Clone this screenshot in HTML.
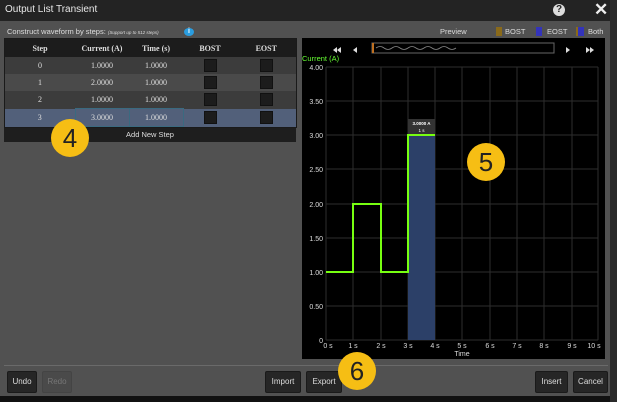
<!DOCTYPE html>
<html><head><style>
body{margin:0;width:617px;height:402px;background:#111;font-family:"Liberation Sans",sans-serif;overflow:hidden;position:relative}
.a{position:absolute}
.btn{position:absolute;top:371px;height:20px;background:#262626;border:1px solid #1a1a1a;border-radius:2px;color:#ddd;font-size:8px;line-height:20px;text-align:center}
.circ{position:absolute;width:38px;height:38px;border-radius:50%;background:#f6be14;color:#222;font-size:26px;line-height:38px;text-align:center}
table{border-collapse:collapse;font-size:8px;color:#ddd;font-family:"Liberation Serif",serif}
td{text-align:center;height:17px;padding:0}
.cb{display:inline-block;width:11px;height:11px;background:#1c1c1c;border:1px solid #111;vertical-align:middle}
</style></head><body>
<div class="a" style="left:0;top:0;width:610px;height:396px;background:#515151;border-right:1px solid #333"></div>
<div class="a" style="left:0;top:0;width:610px;height:21px;background:#232323;color:#e8e8e8;font-size:10px;line-height:20px;padding-left:5px;box-sizing:border-box">Output List Transient</div>
<div class="a" style="left:553px;top:4px;width:12px;height:12px;border-radius:50%;background:#ddd;color:#232323;font-size:10px;font-weight:bold;line-height:12px;text-align:center">?</div>
<div class="a" style="left:594px;top:1px;color:#eee;font-size:17px;font-weight:bold;line-height:18px">✕</div>
<div class="a" style="left:610px;top:0;width:7px;height:402px;background:#2a2a2a"></div>
<div class="a" style="left:7px;top:27px;color:#ddd;font-size:7.5px">Construct waveform by steps: <span style="font-size:4.5px;font-style:italic">(Support up to 512 steps)</span></div>
<div class="a" style="left:184px;top:28px;width:10px;height:8px;border-radius:50%;background:#2a9de0;color:#fff;font-size:7px;line-height:8px;text-align:center;font-weight:bold">i</div>
<div class="a" style="left:440px;top:27px;color:#ddd;font-size:7.5px">Preview</div>
<div class="a" style="left:496px;top:27px;width:6px;height:9px;background:#8a6a1a"></div>
<div class="a" style="left:505px;top:27px;color:#ddd;font-size:7.5px">BOST</div>
<div class="a" style="left:536px;top:27px;width:6px;height:9px;background:#3333bb"></div>
<div class="a" style="left:547px;top:27px;color:#ddd;font-size:7.5px">EOST</div>
<div class="a" style="left:576px;top:27px;width:6px;height:9px;background:#3333bb;border-left:2px solid #8a6a1a"></div>
<div class="a" style="left:588px;top:27px;color:#ddd;font-size:7.5px">Both</div>
<div class="a" style="left:4px;top:38px;width:293px;height:90px;background:#1a1a1a">
<table style="width:291px;margin:1px">
<tr style="height:18px;background:#1c1c1c;font-weight:bold"><td style="width:70px">Step</td><td style="width:54px">Current (A)</td><td style="width:54px">Time (s)</td><td style="width:54px">BOST</td><td>EOST</td></tr>
<tr style="background:#3c3c3c"><td>0</td><td>1.0000</td><td>1.0000</td><td><span class="cb"></span></td><td><span class="cb"></span></td></tr>
<tr style="background:#4a4a4a"><td>1</td><td>2.0000</td><td>1.0000</td><td><span class="cb"></span></td><td><span class="cb"></span></td></tr>
<tr style="background:#3c3c3c"><td>2</td><td>1.0000</td><td>1.0000</td><td><span class="cb"></span></td><td><span class="cb"></span></td></tr>
<tr style="background:#52607a"><td>3</td><td style="border:1px solid #3a6a80">3.0000</td><td style="border:1px solid #3a6a80">1.0000</td><td><span class="cb"></span></td><td><span class="cb"></span></td></tr>
</table></div>
<div class="a" style="left:4px;top:128px;width:292px;height:14px;background:#1e1e1e;color:#ddd;font-size:7.5px;line-height:14px;text-align:center">Add New Step</div>
<svg class="a" style="left:302px;top:38px" width="303" height="321" font-family="Liberation Sans,sans-serif">
<rect width="303" height="321" fill="#000"/>
<polygon points="35,9 31,12 35,15" fill="#ddd"/><polygon points="39,9 35,12 39,15" fill="#ddd"/>
<polygon points="55,9 51,12 55,15" fill="#ddd"/>
<rect x="70" y="5" width="182" height="10" fill="none" stroke="#666"/>
<rect x="70" y="5" width="2" height="10" fill="#c07020"/>
<path d="M74 10 q4 -3 8 0 t8 0 t8 0 t8 0 t8 0 t8 0 t8 0 t8 0 t8 0 t8 0" fill="none" stroke="#888" stroke-width=".8"/>
<polygon points="264,9 268,12 264,15" fill="#ddd"/>
<polygon points="284,9 288,12 284,15" fill="#ddd"/><polygon points="288,9 292,12 288,15" fill="#ddd"/>
<text x="0" y="23" fill="#6f3" font-size="7.5">Current (A)</text>
<g stroke="#2e2e2e" stroke-width="1">
<line x1="24" y1="29" x2="296" y2="29"/><line x1="24" y1="63" x2="296" y2="63"/><line x1="24" y1="97" x2="296" y2="97"/><line x1="24" y1="131" x2="296" y2="131"/><line x1="24" y1="166" x2="296" y2="166"/><line x1="24" y1="200" x2="296" y2="200"/><line x1="24" y1="234" x2="296" y2="234"/><line x1="24" y1="268" x2="296" y2="268"/><line x1="24" y1="302" x2="296" y2="302"/>
<line x1="24" y1="29" x2="24" y2="302"/><line x1="51" y1="29" x2="51" y2="302"/><line x1="79" y1="29" x2="79" y2="302"/><line x1="106" y1="29" x2="106" y2="302"/><line x1="133" y1="29" x2="133" y2="302"/><line x1="160" y1="29" x2="160" y2="302"/><line x1="188" y1="29" x2="188" y2="302"/><line x1="215" y1="29" x2="215" y2="302"/><line x1="242" y1="29" x2="242" y2="302"/><line x1="270" y1="29" x2="270" y2="302"/><line x1="296" y1="29" x2="296" y2="302"/>
</g>
<rect x="106" y="97" width="27" height="205" fill="#2c4068"/>
<path d="M24 234 H51 V166 H79 V234 H106 V97 H133" fill="none" stroke="#7f1" stroke-width="2"/>
<rect x="106" y="81" width="27" height="15" fill="#333"/>
<text x="119.5" y="87" fill="#fff" font-size="4.5" text-anchor="middle" font-weight="bold">3.0000 A</text>
<text x="119.5" y="94" fill="#fff" font-size="4.5" text-anchor="middle">1 s</text>
<g fill="#ddd" font-size="7" text-anchor="end">
<text x="21" y="32">4.00</text><text x="21" y="66">3.50</text><text x="21" y="100">3.00</text><text x="21" y="134">2.50</text><text x="21" y="169">2.00</text><text x="21" y="203">1.50</text><text x="21" y="237">1.00</text><text x="21" y="271">0.50</text><text x="21" y="305">0</text>
</g>
<g fill="#ddd" font-size="7" text-anchor="middle">
<text x="26" y="310">0 s</text><text x="51" y="310">1 s</text><text x="79" y="310">2 s</text><text x="106" y="310">3 s</text><text x="133" y="310">4 s</text><text x="160" y="310">5 s</text><text x="188" y="310">6 s</text><text x="215" y="310">7 s</text><text x="242" y="310">8 s</text><text x="270" y="310">9 s</text><text x="292" y="310">10 s</text>
<text x="160" y="318">Time</text>
</g>
</svg>
<div class="a" style="left:4px;top:365px;width:604px;height:1px;background:#6a6a6a"></div>
<div class="btn" style="left:7px;width:28px">Undo</div>
<div class="btn" style="left:42px;width:28px;background:#4a4a4a;color:#777;border-color:#444">Redo</div>
<div class="btn" style="left:265px;width:34px">Import</div>
<div class="btn" style="left:306px;width:34px">Export</div>
<div class="btn" style="left:535px;width:31px">Insert</div>
<div class="btn" style="left:573px;width:33px">Cancel</div>
<div class="circ" style="left:51px;top:119px">4</div>
<div class="circ" style="left:467px;top:143px">5</div>
<div class="circ" style="left:338px;top:352px">6</div>
</body></html>
